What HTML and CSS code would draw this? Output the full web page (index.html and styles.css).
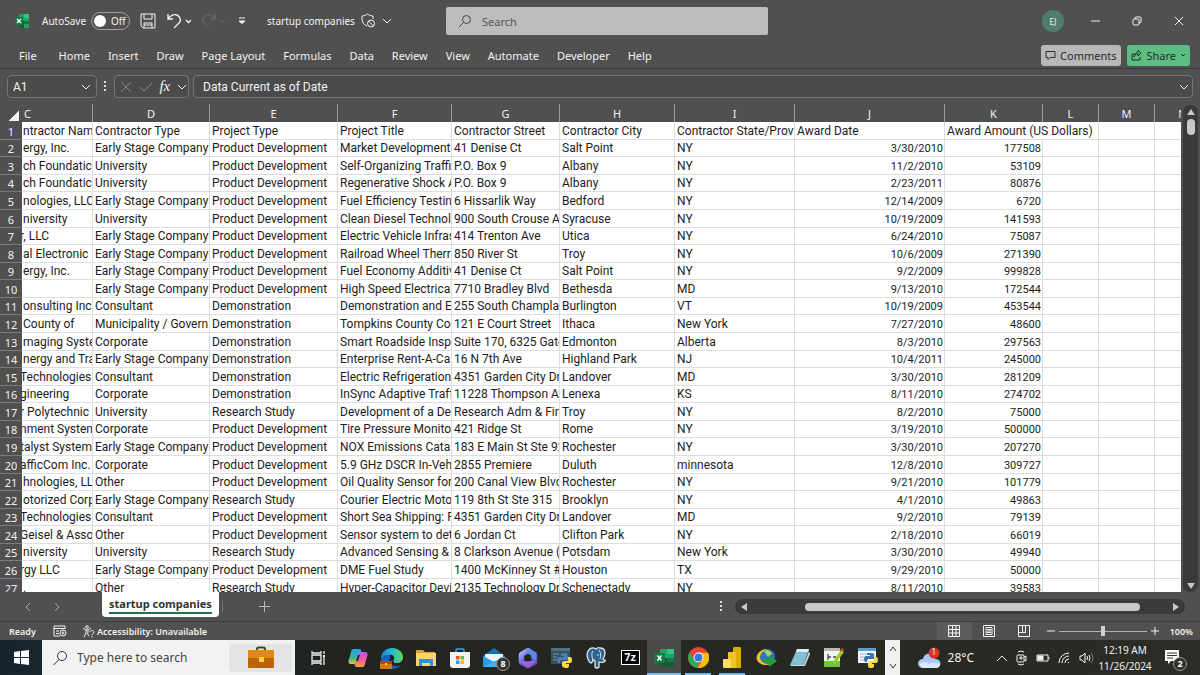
FILE: index.html
```
<!DOCTYPE html>
<html lang="en">
<head>
    <meta charset="UTF-8">
    <meta name="viewport" content="width=device-width, initial-scale=1.0">
    <title>startup companies - Excel</title>
    <link rel="stylesheet" href="styles.css">
</head>
<body>
    <header class="titlebar">
        <div class="title-left">
            <svg class="app-logo" width="14" height="14" viewBox="0 0 14 14"><rect x="4" width="10" height="14" rx="1" fill="#21a366"/><path d="M4 7h5v7H5a1 1 0 0 1-1-1z" fill="#185c37"/><path d="M9 7h5v3H9z" fill="#107c41"/><path d="M9 0h4a1 1 0 0 1 1 1v3H9z" fill="#33c481"/><rect y="3" width="8" height="8" rx="1" fill="#107c41"/><path d="M2 5l4 4M6 5L2 9" stroke="#fff" stroke-width="1.3"/></svg>
            <label class="autosave">AutoSave
                <input type="checkbox" class="autosave-box">
                <span class="toggle">Off</span>
            </label>
            <button class="icon-btn save" aria-label="Save"><svg width="16" height="16" viewBox="0 0 16 16"><path d="M1 1h14v14H3l-2-2zM4 1v5h8V1M4 15v-5h8v5M4 12h8"/></svg></button>
            <button class="icon-btn undo" aria-label="Undo"><svg width="24" height="16" viewBox="0 0 24 16"><path d="M1 1v5h5M1 6c3-4 6-5 9-4 4 2 4 6 2 8l-5 5" stroke-width="1.4"/><path d="M19 7l2.500 2.500L24 7" stroke-width="1.400"/></svg></button>
            <button class="icon-btn redo" aria-label="Redo" disabled><svg width="24" height="16" viewBox="0 0 24 16"><path d="M13 1v5H8M13 6C10 2 7 1 4 2 0 4 0 8 2 10l5 5"/><path d="M18 7l2.500 2.500L23 7"/></svg></button>
            <button class="icon-btn customize" aria-label="Customize toolbar"><svg width="8" height="8" viewBox="0 0 8 8"><path d="M1 1h6M1 4l3 2.500L7 4z"/></svg></button>
            <span class="file-name">startup companies</span>
            <button class="icon-btn" aria-label="File protection"><svg width="30" height="16" viewBox="0 0 30 16"><path d="M6 13C3 12 1 9 1 6V3c2 0 4-1 5.500-2C8 2 10 3 12 3v3"/><circle cx="10" cy="10.500" r="3.500"/><path d="M7.500 8l5 5M22 6l4 4 4-4"/></svg></button>
        </div>
        <label class="search">
            <svg width="14" height="14" viewBox="0 0 14 14"><circle cx="8.500" cy="5.500" r="4"/><path d="M5.500 8.500L1 13"/></svg>
            <input type="text" placeholder="Search" aria-label="Search">
        </label>
        <div class="title-right">
            <button class="avatar">EJ</button>
            <button class="win-btn" aria-label="Minimize"><svg width="10" height="10" viewBox="0 0 10 10"><path d="M1 5h9"/></svg></button>
            <button class="win-btn" aria-label="Restore"><svg width="10" height="10" viewBox="0 0 10 10"><rect x="1" y="3" width="6" height="6" rx="1"/><path d="M3 3V2q0-1 1-1h4q1 0 1 1v4q0 1-2 1"/></svg></button>
            <button class="win-btn" aria-label="Close"><svg width="10" height="10" viewBox="0 0 10 10"><path d="M1 1l8 8M9 1L1 9"/></svg></button>
        </div>
    </header>

    <nav class="ribbon">
        <a href="#" class="file-tab">File</a>
        <a href="#">Home</a>
        <a href="#">Insert</a>
        <a href="#">Draw</a>
        <a href="#">Page Layout</a>
        <a href="#">Formulas</a>
        <a href="#">Data</a>
        <a href="#">Review</a>
        <a href="#">View</a>
        <a href="#">Automate</a>
        <a href="#">Developer</a>
        <a href="#">Help</a>
        <button class="comments"><svg width="11" height="11" viewBox="0 0 11 11"><path d="M1 1.500h9v6H5L3 9.500v-2H1z"/></svg>Comments</button>
        <button class="share"><svg width="11" height="11" viewBox="0 0 11 11"><path d="M3 4H1v6h8V7M3 7c0-2 2-3 4-3V6l3-3-3-2.500v2C5 2.500 3 4 3 7z"/></svg>Share<svg width="6" height="6" viewBox="0 0 6 6"><path d="M1 2l2 2 2-2"/></svg></button>
    </nav>

    <div class="formula-bar">
        <div class="name-box">
            <input type="text" value="A1" aria-label="Name box">
            <svg width="10" height="6" viewBox="0 0 10 6"><path d="M1 1l4 4 4-4"/></svg>
        </div>
        <svg class="dots" width="3" height="11" viewBox="0 0 3 11"><path d="M0 0h2v2H0zM0 4h2v2H0zM0 8h2v2H0z"/></svg>
        <div class="fx-box">
            <svg class="dim" width="12" height="12" viewBox="0 0 12 12"><path d="M1 1l10 10M11 1L1 11"/></svg>
            <svg class="dim" width="14" height="12" viewBox="0 0 14 12"><path d="M1 6l4 4 8-8"/></svg>
            <button class="fx">fx</button>
            <svg width="9" height="6" viewBox="0 0 9 6"><path d="M1 1l4 4 4-4"/></svg>
        </div>
        <div class="formula-box">
            <input type="text" value="Data Current as of Date" aria-label="Formula bar">
            <svg width="10" height="6" viewBox="0 0 10 6"><path d="M1 1l4 4 4-4"/></svg>
        </div>
    </div>

    <main class="sheet">
        <div class="grid">
            <table>
                <colgroup>
                    <col class="w-row"><col class="w-c"><col class="w-d"><col class="w-e"><col class="w-f"><col class="w-g"><col class="w-h"><col class="w-i"><col class="w-j"><col class="w-k"><col class="w-l"><col class="w-l"><col class="w-l">
                </colgroup>
                <thead>
                    <tr><th class="corner"></th><th class="col-c">C</th><th>D</th><th>E</th><th>F</th><th>G</th><th>H</th><th>I</th><th>J</th><th>K</th><th>L</th><th>M</th><th>N</th></tr>
                </thead>
                <tbody id="rows"></tbody>
            </table>
        </div>
        <div class="vscroll">
            <svg width="10" height="8" viewBox="0 0 10 8"><path d="M5 1l4 6H1z"/></svg>
            <div class="vthumb"></div>
            <svg class="down" width="10" height="8" viewBox="0 0 10 8"><path d="M5 7l4-6H1z"/></svg>
        </div>
    </main>

    <div class="tabs">
        <div class="tab-nav">
            <svg width="6" height="10" viewBox="0 0 6 10"><path d="M5 1L1 5l4 4"/></svg>
            <svg width="6" height="10" viewBox="0 0 6 10"><path d="M1 1l4 4-4 4"/></svg>
        </div>
        <button class="tab"><span>startup companies</span></button>
        <button class="add" aria-label="New sheet"><svg width="11" height="11" viewBox="0 0 11 11"><path d="M5.500 0v11M0 5.500h11"/></svg></button>
        <svg class="dots" width="3" height="11" viewBox="0 0 3 11"><path d="M0 0h2v2H0zM0 4h2v2H0zM0 8h2v2H0z"/></svg>
        <div class="hscroll">
            <svg width="8" height="10" viewBox="0 0 8 10"><path d="M1 5l6-4v8z"/></svg>
            <div class="hthumb"></div>
            <svg width="8" height="10" viewBox="0 0 8 10"><path d="M7 5L1 1v8z"/></svg>
        </div>
    </div>

    <footer class="status">
        <span>Ready</span>
        <svg class="macro" width="14" height="12" viewBox="0 0 14 12"><path d="M7 11H1V1h11v3M1 3.500h11M3 6h3M3 8.500h3"/><circle cx="10" cy="8" r="3"/><circle cx="10" cy="8" r="1"/></svg>
        <svg width="13" height="13" viewBox="0 0 13 13"><circle cx="5" cy="2" r="1.300"/><path d="M1 3l3 2v3l-2 4M9 3L6 5v3M4 5h2M5 8l2 3M8 7c0-2 4-2 4 0 0 1.500-2 1.500-2 3M10 11v1.500"/></svg>
        <span class="access">Accessibility: Unavailable</span>
        <div class="views">
            <button class="on" aria-label="Normal"><svg width="12" height="12" viewBox="0 0 12 12"><path d="M.5.5h11v11H.5zM4.500 0v12M8 0v12M0 4.500h12M0 8h12"/></svg></button>
            <button aria-label="Page Layout"><svg width="12" height="12" viewBox="0 0 12 12"><path d="M.5.5h11v11H.5zM3 2.500h6v7H3zM4 4.500h4M4 6h4M4 7.500h4"/></svg></button>
            <button aria-label="Page Break Preview"><svg width="12" height="12" viewBox="0 0 12 12"><path d="M.5.5h11v11H.5zM4.500 0v7.500M7.500 0v7.500M0 7.500h8"/></svg></button>
        </div>
        <button class="zoom-btn" aria-label="Zoom out"><svg width="8" height="8" viewBox="0 0 8 8"><path d="M0 4h8"/></svg></button>
        <input type="range" class="zoom" min="10" max="190" value="100" aria-label="Zoom">
        <button class="zoom-btn" aria-label="Zoom in"><svg width="8" height="8" viewBox="0 0 8 8"><path d="M0 4h8M4 0v8"/></svg></button>
        <span class="percent">100%</span>
    </footer>

    <div class="taskbar">
        <button class="start" aria-label="Start"><svg width="15" height="15" viewBox="0 0 15 15"><path d="M0 2l6-1v6H0zM7 1l8-1v7H7zM0 8h6v6l-6-1zM7 8h8v7l-8-1z"/></svg></button>
        <label class="task-search">
            <svg width="16" height="16" viewBox="0 0 16 16"><circle cx="10" cy="6" r="4.500"/><path d="M7 9.500L1.500 15"/></svg>
            <input type="text" placeholder="Type here to search" aria-label="Type here to search">
            <span class="briefcase"><svg width="28" height="24" viewBox="0 0 28 24"><path d="M10 5V3q0-1.500 1.500-1.500h5Q18 1.500 18 3v2" fill="none" stroke="#4a4038" stroke-width="2"/><rect x="1" y="4" width="26" height="9" rx="1" fill="#e08a10"/><path d="M1 12h26v9q0 1-1 1H2q-1 0-1-1z" fill="#b9640a"/><rect x="12" y="11" width="5" height="5" fill="#ffd43a"/></svg></span>
        </label>
        <button class="task-view" aria-label="Task View"><svg width="15" height="14" viewBox="0 0 15 14"><path d="M1 0v2h9V0M1 14v-2h9v2M1 4h9v6H1zM13 0v3M13 6v8" fill="none" stroke="#eee" stroke-width="1.300"/><path d="M12 4h2v2h-2z" fill="#eee"/></svg></button>
        <div class="apps">
            <button aria-label="Copilot"><svg width="22" height="22" viewBox="0 0 22 22"><defs><linearGradient id="cp1" x2="0" y2="1"><stop stop-color="#2a9df0"/><stop offset=".6" stop-color="#35b98e"/><stop offset="1" stop-color="#f0c52c"/></linearGradient><linearGradient id="cp2" x2="0" y2="1"><stop stop-color="#b15cf0"/><stop offset=".5" stop-color="#ee5a9a"/><stop offset="1" stop-color="#f9a04c"/></linearGradient></defs><path d="M6 2h6q2 0 2.500 2L11 14q-1 3-3 3H4q-3 0-2.500-3L4 5q.5-3 2-3z" fill="url(#cp1)"/><path d="M16 20h-6q-2 0-2.500-2L11 8q1-3 3-3h4q3 0 2.500 3L18 17q-.5 3-2 3z" fill="url(#cp2)"/><path d="M11 8l-2 6h2l2-6z" fill="#252724"/></svg></button>
            <button aria-label="Edge"><svg width="24" height="22" viewBox="0 0 24 22"><defs><linearGradient id="ed" x2="1"><stop stop-color="#1683d8"/><stop offset=".5" stop-color="#25b9d8"/><stop offset="1" stop-color="#67d75b"/></linearGradient></defs><path d="M1 12C1 5 6 1 12 1s11 4 11 9c0 4-3 6-6 6-4 0-4-2-3-4 1-3-2-5-5-4-3 0-6 2-8 4z" fill="url(#ed)"/><path d="M1 12c3-5 10-6 9-1-3 4 1 9 8 8 2 0 3-1 4-2-3 4-7 5-11 5C5 22 1 17 1 12z" fill="#1565b8"/><rect y="14" width="12" height="8" fill="#d9780f"/><path d="M0 14h12v3H0z" fill="#a84d08"/><path d="M5 16h2v2H5z" fill="#ffd43a"/></svg></button>
            <button aria-label="File Explorer"><svg width="20" height="18" viewBox="0 0 20 18"><path d="M0 1h7l2 2h10v5H0z" fill="#e0a030"/><path d="M0 4h20v13H0z" fill="#fbd568"/><path d="M3 10h14v7h-3v-3H6v3H3z" fill="#3b8fd8"/></svg></button>
            <button aria-label="Store"><svg width="20" height="20" viewBox="0 0 20 20"><path d="M6 5V2q0-1 1-1h6q1 0 1 1v3" fill="none" stroke="#2ea4e8" stroke-width="1.500"/><path d="M0 4h20v13q0 3-3 3H3q-3 0-3-3z" fill="#f1f2f3"/><path d="M6 8h3.500v3.500H6z" fill="#e8502a"/><path d="M10.500 8H14v3.500h-3.500z" fill="#78b82a"/><path d="M6 12.500h3.500V16H6z" fill="#2a9fe0"/><path d="M10.500 12.500H14V16h-3.500z" fill="#f7b916"/></svg></button>
            <button class="has-badge" aria-label="Mail"><svg width="22" height="20" viewBox="0 0 22 20"><path d="M0 8l11-8 11 8v11H0z" fill="#1570b8"/><path d="M2 6h18v9H2z" fill="#e8f3fb"/><path d="M0 8l11 6-11 5z" fill="#28a0e8"/><path d="M22 8l-11 6 11 5z" fill="#1c86d0"/><path d="M0 19l11-6 11 6z" fill="#36b2f2"/></svg><span class="badge">8</span></button>
            <button aria-label="Microsoft 365"><svg width="20" height="22" viewBox="0 0 20 22"><defs><linearGradient id="m3" x2="1" y2="1"><stop stop-color="#b9b4f5"/><stop offset=".4" stop-color="#6f62dd"/><stop offset="1" stop-color="#7448c8"/></linearGradient></defs><path d="M10 3.500l6.500 4v7.500L10 18.500 3.500 15V7.500z" fill="none" stroke="url(#m3)" stroke-width="5.500" stroke-linejoin="round"/><path d="M10 1l8 5v8l-5-3V8l-5-3z" fill="#4f9be6" opacity=".75"/><path d="M2 15l9-1 7 0-7 6H9z" fill="#a873e8" opacity=".6"/></svg></button>
            <button aria-label="Python script"><svg width="22" height="20" viewBox="0 0 22 20"><path d="M0 0h19v16H0z" fill="#38515c"/><path d="M0 0h19v3H0z" fill="#4d7386"/><path d="M2 6h6M2 9h4M2 12h5M11 6h5" stroke="#78909c"/><path d="M10 6h5q2 0 2 2v4h-6q-2 0-2 3H8q-2 0-2-3 0-2 2-3h5V8h-3z" fill="#3f82c0"/><path d="M17 9h2q2 0 2 3t-2 3h-4v1h3v2q0 2-3 2t-4-2v-3q0-2 2-2h4z" fill="#ffd94a"/></svg></button>
            <button aria-label="PostgreSQL"><svg width="22" height="22" viewBox="0 0 22 22"><path d="M3 4c-2 4 0 11 3 12 1 0 2-2 2-3 1 0 1 0 2 1v6q2 2 4 0v-5c3 1 7 0 6-2-2 0-2 0-2-1 3-5 3-11-3-11-2-1-3 0-4 1C8 0 5 1 3 4z" fill="#31648c" stroke="#dce6ee" stroke-width="1.300"/><path d="M8 4c-2 3-1 6 0 9M14 3c2 3 2 5 1 9M12 8h2" fill="none" stroke="#dce6ee"/></svg></button>
            <button class="seven" aria-label="7-Zip"><span>7z</span></button>
            <button class="running active" aria-label="Excel"><svg width="20" height="18" viewBox="0 0 20 18"><path d="M6 0h7v9H6z" fill="#21a366"/><path d="M13 0h7v5h-7z" fill="#33c481"/><path d="M13 5h7v5h-7z" fill="#21a366"/><path d="M6 9h14v9H6z" fill="#185c37"/><path d="M13 9h7v4h-7z" fill="#107c41"/><rect y="4" width="11" height="10" rx="1" fill="#107c41"/><path d="M3.500 6.500l4 5M7.500 6.500l-4 5" stroke="#fff" stroke-width="1.500"/></svg></button>
            <button class="running" aria-label="Chrome"><svg width="21" height="21" viewBox="0 0 22 22"><circle cx="11" cy="11" r="11" fill="#e94335"/><path d="M1.500 5.500L6.500 14 11 16l-1 6A11 11 0 0 1 1.500 5.500z" fill="#34a853"/><path d="M11 6h10a11 11 0 0 1-11 16l5-8.500z" fill="#fbbc05"/><circle cx="11" cy="11" r="5.200" fill="#fff"/><circle cx="11" cy="11" r="4.200" fill="#3478e8"/></svg></button>
            <button class="running" aria-label="Power BI"><svg width="18" height="21" viewBox="0 0 18 21"><rect x="10" width="8" height="21" rx="1" fill="#e0a80c"/><rect x="5" y="5" width="8" height="16" rx="1" fill="#f0c32a"/><rect y="12" width="8" height="9" rx="1" fill="#fbdd6a"/></svg></button>
            <button aria-label="Download Manager"><svg width="22" height="20" viewBox="0 0 22 20"><circle cx="12" cy="9" r="8" fill="#2f72c8"/><path d="M12 1C5 1 0 7 2 12c2 5 9 6 13 4-5 0-9-2-10-6 0-4 3-7 7-9z" fill="#f0c020"/><path d="M9 3c3-2 7 0 8 3l-4 3z" fill="#a8d860"/><path d="M7 11h7V7l8 6-8 6v-4c-4 0-6-2-7-4z" fill="#22a035"/></svg></button>
            <button aria-label="Notepad"><svg width="20" height="19" viewBox="0 0 20 19"><path d="M7 1h12l-5 16H0z" fill="#80bdd0"/><path d="M7 1h12l-1 3H6z" fill="#dcecf0"/><path d="M0 17h14l5-14 1 3-5 12H1z" fill="#d2dadd"/><path d="M6 7h9M5 10h9M4 13h9" stroke="#8fc6d6"/></svg></button>
            <button aria-label="Notepad++"><svg width="20" height="21" viewBox="0 0 20 21"><rect y="1" width="16" height="19" fill="#f5f5f0"/><path d="M0 1h16v3H0z" fill="#b8b8b8"/><path d="M0 14h16v6H0z" fill="#6cc830"/><path d="M4 7v6M4 10h3M9 10h3" fill="none" stroke="#444" stroke-width="1.300"/><path d="M17 3l3 2-8 11-3 1 1-4z" fill="#a5c733"/><path d="M18 1l2 1-1 3-3-2z" fill="#c54b34"/></svg></button>
            <button aria-label="Python file"><svg width="20" height="20" viewBox="0 0 20 20"><path d="M0 0h18v15H0z" fill="#f2f6f8"/><path d="M0 0h18v3H0z" fill="#56a0d2"/><path d="M2 6h6M2 9h4M2 12h4" stroke="#99b8ca"/><path d="M9 5h5q2 0 2 2v4h-5q-2 0-2 3H8q-2 0-2-3t2-3h4V7H9z" fill="#3b76a8"/><path d="M16 9h2q2 0 2 3t-2 3h-4v1h2v2q0 2-3 2t-3-2v-3q0-2 2-2h4z" fill="#ffd84a"/></svg></button>
        </div>
        <div class="pager">
            <svg width="8" height="6" viewBox="0 0 8 6"><path d="M1 5l3-4 3 4"/></svg>
            <svg width="8" height="6" viewBox="0 0 8 6"><path d="M1 1l3 4 3-4"/></svg>
        </div>
        <div class="weather">
            <svg width="24" height="22" viewBox="0 0 24 22"><path d="M5 21a5 4.500 0 0 1 0-9c1-7 11-7 12 0a5 4.500 0 0 1 1 9z" fill="#a9c8f5"/><path d="M2 17c3-3 8-2 9 0 3-2 7-1 11 0 0 3-2 4-4 4H5c-2 0-3-2-3-4z" fill="#dbe7fb"/><circle cx="16" cy="6" r="5.500" fill="#d5352b"/></svg>
            <span class="alert">1</span>
            <span>28°C</span>
        </div>
        <div class="tray">
            <svg width="12" height="8" viewBox="0 0 12 8"><path d="M1 7l5-5 5 5"/></svg>
            <svg width="12" height="16" viewBox="0 0 12 16"><rect x="1" y="5" width="7" height="7" rx="1"/><path d="M8 7l2-1v5l-2-1M2 2q3-2 6 0M2 14q3 2 6 0M4 7h2v2H4z"/></svg>
            <svg width="14" height="8" viewBox="0 0 14 8"><path d="M1 1h11v6H1zM13 3v2"/><path d="M2 2h5v4H2z" fill="#eee"/></svg>
            <svg width="13" height="12" viewBox="0 0 13 12"><path d="M1 11A10 10 0 0 1 11 1M4 11a7 7 0 0 1 7-7M7 11a4 4 0 0 1 4-4M10 11l1-1"/></svg>
            <svg width="15" height="12" viewBox="0 0 15 12"><path d="M1 4h2l3-3v10L3 8H1zM8 4q1 2 0 4M10 3q2 3 0 6"/><path d="M12 1q4 5 0 10" opacity=".4"/></svg>
        </div>
        <div class="clock">12:19 AM<br>11/26/2024</div>
        <button class="notify" aria-label="Notifications"><svg width="16" height="15" viewBox="0 0 16 15"><path d="M0 0h14v11H6l-3 3v-3H0z" fill="#fff"/><path d="M2 3h10M2 5.500h10M2 8h6" stroke="#33342f"/></svg><span class="badge">2</span></button>
    </div>

    <script>
        // One line per sheet row, columns C to K
        const data = `ntractor Nam|Contractor Type|Project Type|Project Title|Contractor Street|Contractor City|Contractor State/Provi|Award Date|Award Amount (US Dollars)
ergy, Inc.|Early Stage Company|Product Development|Market Development|41 Denise Ct|Salt Point|NY|3/30/2010|177508
ch Foundatic|University|Product Development|Self-Organizing Traffi|P.O. Box 9|Albany|NY|11/2/2010|53109
ch Foundatic|University|Product Development|Regenerative Shock A|P.O. Box 9|Albany|NY|2/23/2011|80876
nologies, LLC|Early Stage Company|Product Development|Fuel Efficiency Testin|6 Hissarlik Way|Bedford|NY|12/14/2009|6720
niversity|University|Product Development|Clean Diesel Technol|900 South Crouse Av|Syracuse|NY|10/19/2009|141593
r, LLC|Early Stage Company|Product Development|Electric Vehicle Infras|414 Trenton Ave|Utica|NY|6/24/2010|75087
al Electronic|Early Stage Company|Product Development|Railroad Wheel Therr|850 River St|Troy|NY|10/6/2009|271390
ergy, Inc.|Early Stage Company|Product Development|Fuel Economy Additiv|41 Denise Ct|Salt Point|NY|9/2/2009|999828
|Early Stage Company|Product Development|High Speed Electrical|7710 Bradley Blvd|Bethesda|MD|9/13/2010|172544
onsulting Inc|Consultant|Demonstration|Demonstration and E|255 South Champlai|Burlington|VT|10/19/2009|453544
County of|Municipality / Govern|Demonstration|Tompkins County Co|121 E Court Street|Ithaca|New York|7/27/2010|48600
maging Syste|Corporate|Demonstration|Smart Roadside Insp|Suite 170, 6325 Gate|Edmonton|Alberta|8/3/2010|297563
nergy and Tra|Early Stage Company|Demonstration|Enterprise Rent-A-Ca|16 N 7th Ave|Highland Park|NJ|10/4/2011|245000
Technologies|Consultant|Demonstration|Electric Refrigeration|4351 Garden City Dr|Landover|MD|3/30/2010|281209
gineering|Corporate|Demonstration|InSync Adaptive Traff|11228 Thompson Av|Lenexa|KS|8/11/2010|274702
r Polytechnic|University|Research Study|Development of a De|Research Adm & Fin|Troy|NY|8/2/2010|75000
nment System|Corporate|Product Development|Tire Pressure Monito|421 Ridge St|Rome|NY|3/19/2010|500000
talyst System|Early Stage Company|Product Development|NOX Emissions Cata|183 E Main St Ste 925|Rochester|NY|3/30/2010|207270
afficCom Inc.|Corporate|Product Development|5.9 GHz DSCR In-Vehi|2855 Premiere|Duluth|minnesota|12/8/2010|309727
hnologies, LL|Other|Product Development|Oil Quality Sensor for|200 Canal View Blvd|Rochester|NY|9/21/2010|101779
otorized Corp|Early Stage Company|Research Study|Courier Electric Moto|119 8th St Ste 315|Brooklyn|NY|4/1/2010|49863
Technologies|Consultant|Product Development|Short Sea Shipping: P|4351 Garden City Dr|Landover|MD|9/2/2010|79139
Geisel & Assoc|Other|Product Development|Sensor system to dete|6 Jordan Ct|Clifton Park|NY|2/18/2010|66019
niversity|University|Research Study|Advanced Sensing &|8 Clarkson Avenue (|Potsdam|New York|3/30/2010|49940
rgy LLC|Early Stage Company|Product Development|DME Fuel Study|1400 McKinney St # 2|Houston|TX|9/29/2010|50000
.|Other|Research Study|Hyper-Capacitor Devi|2135 Technology Dr|Schenectady|NY|8/11/2010|39583`;

        // rows whose first visible letter is cut by the row header
        const cutRows = [7, 15, 16, 17, 18, 19, 20, 23, 24, 26];
        const tbody = document.getElementById('rows');

        data.split('\n').forEach((line, r) => {
            const tr = document.createElement('tr');
            const th = document.createElement('th');
            th.textContent = r + 1;
            tr.appendChild(th);
            line.split('|').concat('', '', '').forEach((text, c) => {
                const td = document.createElement('td');
                td.textContent = text;
                if (c === 0) td.className = cutRows.includes(r + 1) ? 'first cut' : 'first';
                if (r > 0 && (c === 7 || c === 8)) td.className = 'num';
                if (r === 0 && c === 8) td.className = 'spill';
                tr.appendChild(td);
            });
            tbody.appendChild(tr);
        });
    </script>
</body>
</html>
```
FILE: styles.css
```
* {
    box-sizing: border-box;
}

body {
    margin: 0;
    height: 100vh;
    display: flex;
    flex-direction: column;
    overflow: hidden;
    background-color: #505050;
    color: #f2f2f2;
    font-family: "Noto Sans", sans-serif;
    font-size: 11px;
}

button, input {
    font: inherit;
    color: inherit;
    background: none;
    border: 0;
    padding: 0;
    margin: 0;
}

input[type="text"] {
    flex: 1;
    min-width: 0;
    outline: none;
}

a {
    color: inherit;
    text-decoration: none;
}

svg {
    display: block;
    flex: none;
    fill: none;
    stroke: currentColor;
}

/* title bar */
.titlebar {
    display: grid;
    grid-template-columns: 37fr 27fr 36fr;
    align-items: center;
    height: 42px;
}

.title-left {
    display: flex;
    align-items: center;
    padding-left: 15px;
    white-space: nowrap;
}

.app-logo {
    stroke: none;
    margin-right: 13px;
}

.autosave {
    display: flex;
    align-items: center;
    gap: 5px;
    font-size: 10px;
    margin-right: 10px;
}

.autosave-box {
    position: absolute;
    opacity: 0;
}

.toggle {
    display: flex;
    align-items: center;
    gap: 5px;
    width: 39px;
    height: 18px;
    padding-left: 2px;
    border: 1px solid #a0a0a0;
    border-radius: 9px;
}

.toggle::before {
    content: "";
    width: 12px;
    height: 12px;
    border-radius: 50%;
    background-color: #fff;
}

.icon-btn {
    margin-right: 11px;
}

.redo {
    color: #6e6e6e;
    margin-right: 12px;
}

.customize {
    margin-right: 21px;
}

.customize path {
    fill: currentColor;
}

.file-name {
    margin-right: 6px;
    font-size: 10px;
}

.search {
    display: flex;
    align-items: center;
    gap: 10px;
    height: 28px;
    margin-left: 2px;
    padding-left: 12px;
    border-radius: 2px;
    background-color: #bdbdbd;
    color: #444;
}

.search input::placeholder {
    color: #555;
    opacity: 1;
}

.title-right {
    display: flex;
    justify-content: flex-end;
    align-items: center;
}

.avatar {
    width: 22px;
    height: 22px;
    margin-right: 10px;
    border-radius: 50%;
    background-color: #4f7d70;
    font-size: 8px;
}

.win-btn {
    display: flex;
    justify-content: center;
    width: 42px;
}

/* ribbon tabs */
.ribbon {
    display: flex;
    align-items: center;
    gap: 18px;
    height: 27px;
    padding: 0 10px 0 19px;
    border-bottom: 1px solid #383838;
}

.file-tab {
    margin-right: 4px;
}

.comments, .share {
    display: flex;
    align-items: center;
    gap: 4px;
    height: 21px;
    border-radius: 3px;
    color: #2b2b2b;
}

.comments {
    margin-left: auto;
    padding: 0 5px 0 4px;
    background-color: #b8b8b8;
}

.share {
    margin-left: -12px;
    padding: 0 4px;
    background-color: #5cbd82;
}

/* formula bar */
.formula-bar {
    display: flex;
    align-items: center;
    height: 35px;
    padding: 0 7px;
    font-family: Roboto, sans-serif;
    font-size: 12px;
}

.name-box, .fx-box, .formula-box {
    display: flex;
    align-items: center;
    height: 23px;
    border: 1px solid #767676;
    border-radius: 4px;
    background-color: #4b4b4b;
}

.name-box {
    width: 90px;
    padding: 0 5px;
}

.formula-box {
    flex: 1;
    padding: 0 3px 0 9px;
}

.dots {
    fill: #ddd;
    stroke: none;
}

.formula-bar .dots {
    margin: 0 7px;
}

.fx-box {
    width: 75px;
    margin-right: 4px;
    padding: 0 2px 0 5px;
    justify-content: space-between;
}

.dim {
    color: #858585;
}

.fx {
    font-family: "Liberation Serif", serif;
    font-style: italic;
    font-size: 15px;
}

/* sheet */
.sheet {
    display: flex;
    flex: 1;
    min-height: 0;
}

.grid {
    flex: 1;
    min-width: 0;
    overflow: hidden;
    background-color: #fff;
}

table {
    width: 1211px;
    table-layout: fixed;
    border-spacing: 0;
    font-family: Roboto, sans-serif;
    font-size: 12px;
    line-height: 15px;
    color: #1c1c1c;
}

.w-row { width: 22px; }
.w-c { width: 71px; }
.w-d { width: 117px; }
.w-e { width: 128px; }
.w-f { width: 114px; }
.w-g { width: 108px; }
.w-h { width: 115px; }
.w-i { width: 120px; }
.w-j { width: 150px; }
.w-k { width: 98px; }
.w-l { width: 56px; }

th {
    padding: 0;
    font-family: "Noto Sans", sans-serif;
    font-weight: normal;
    font-size: 11px;
    color: #f2f2f2;
    background-color: #505050;
}

thead th {
    height: 18px;
    border-right: 1px solid #9a9a9a;
}

thead .corner {
    border-right: 0;
    background: linear-gradient(135deg, #505050 50%, #f2f2f2 50%) no-repeat 9px 7px / 10px 10px #505050;
}

.col-c {
    text-align: left;
    padding-left: 2px;
}

tbody th {
    padding-top: 1px;
    border-bottom: 1px solid #7a7a7a;
}

td {
    height: 18px;
    padding: 1px 0 0 2px;
    border-right: 1px solid #dedede;
    border-bottom: 1px solid #dedede;
    white-space: nowrap;
    overflow: hidden;
}

/* row pitch is a little under 18px */
tr:nth-child(7n+2) td,
tr:nth-child(7n+4) td,
tr:nth-child(7n) td {
    height: 17px;
}

.first {
    padding-left: 1px;
}

.cut {
    text-indent: -3px;
}

.num {
    padding-right: 1px;
    text-align: right;
    font-size: 11px;
}

.spill {
    overflow: visible;
    border-right-color: transparent;
}

.vscroll {
    display: flex;
    flex-direction: column;
    align-items: center;
    width: 15px;
    margin: 1px 2px 0 2px;
    padding: 3px 0 2px;
    border-radius: 7px;
    background-color: #3a3a3a;
}

.vscroll svg, .hscroll svg {
    fill: #c8c8c8;
    stroke: none;
}

.vthumb {
    width: 8px;
    height: 16px;
    margin-top: 3px;
    border-radius: 4px;
    background-color: #c8c8c8;
}

.down {
    margin-top: auto;
}

/* sheet tabs */
.tabs {
    display: flex;
    align-items: center;
    height: 30px;
    padding-right: 15px;
    border-bottom: 1px solid #3f3f3f;
}

.tab-nav {
    display: flex;
    gap: 23px;
    width: 102px;
    padding-left: 25px;
    color: #a5a5a5;
}

.tab {
    display: flex;
    align-self: flex-start;
    height: 25px;
    padding: 3px 7px 0;
    border-radius: 0 0 4px 4px;
    background-color: #fff;
    color: #333;
    font-weight: bold;
}

.tab span {
    height: 19px;
    line-height: 18px;
    border-bottom: 2px solid #217346;
}

.add {
    margin-right: auto;
    margin-left: 3px;
    padding-left: 36px;
    border-left: 1px solid #707070;
    color: #bdbdbd;
}

.hscroll {
    display: flex;
    align-items: center;
    width: 450px;
    height: 15px;
    margin-left: 12px;
    padding: 0 5px;
    border-radius: 7px;
    background-color: #3a3a3a;
}

.hthumb {
    width: 335px;
    height: 8px;
    margin: 0 32px 0 auto;
    border-radius: 4px;
    background-color: #c8c8c8;
}

/* status bar */
.status {
    display: flex;
    align-items: center;
    height: 18px;
    padding: 0 7px 0 9px;
    font-size: 9px;
    font-weight: 600;
}

.macro {
    margin: 0 15px 0 17px;
}

.access {
    margin-left: 2px;
}

.views {
    display: flex;
    margin: 0 21px 0 auto;
}

.views button {
    display: flex;
    align-items: center;
    justify-content: center;
    width: 35px;
    height: 18px;
}

.views .on {
    background-color: #5c5c5c;
}

.views + .zoom-btn {
    margin-left: -16px;
}

.zoom {
    appearance: none;
    width: 88px;
    height: 12px;
    margin: 0 4px;
    background: linear-gradient(#b0b0b0, #b0b0b0) no-repeat center / 100% 1px;
}

.zoom::-webkit-slider-thumb {
    appearance: none;
    width: 4px;
    height: 10px;
    background-color: #d0d0d0;
}

.percent {
    margin-left: 11px;
}

/* taskbar */
.taskbar {
    display: flex;
    align-items: stretch;
    height: 35px;
    background: linear-gradient(90deg, #18242d, #22241f 30%, #2b2c25);
}

.taskbar svg {
    stroke: none;
}

.taskbar button {
    display: flex;
    align-items: center;
    justify-content: center;
}

.start {
    width: 42px;
}

.start svg {
    fill: #fff;
}

.task-search {
    display: flex;
    align-items: center;
    gap: 9px;
    width: 253px;
    padding: 0 3px 0 10px;
    background-color: #f2f2f2;
    color: #333;
    font-size: 12px;
}

.task-search > svg, .pager svg, .tray svg {
    stroke: currentColor;
}

.task-search input::placeholder {
    color: #444;
    opacity: 1;
}

.briefcase {
    display: flex;
    align-items: center;
    justify-content: center;
    width: 63px;
    height: 28px;
    border-radius: 4px;
    background-color: #e4e4e4;
}

.task-view {
    width: 46px;
}

.apps {
    display: flex;
}

.apps button {
    width: 34px;
}

.apps .running {
    position: relative;
}

.running::after {
    content: "";
    position: absolute;
    bottom: 0;
    left: 4px;
    right: 4px;
    height: 2px;
    background-color: #76b9ed;
}

.apps .active {
    background-color: #4a4b48;
}

.active::after {
    left: 0;
    right: 0;
}

.has-badge, .notify {
    position: relative;
}

.badge {
    position: absolute;
    right: 1px;
    bottom: 4px;
    width: 14px;
    height: 14px;
    border: 1px solid #999;
    border-radius: 50%;
    background-color: #30332f;
    color: #fff;
    font-size: 9px;
    font-weight: bold;
    line-height: 12px;
    text-align: center;
}

.seven span {
    width: 19px;
    height: 15px;
    border: 1px solid #fff;
    background-color: #000;
    font-size: 11px;
    font-weight: bold;
    line-height: 12px;
}

.pager {
    display: flex;
    flex-direction: column;
    justify-content: space-around;
    align-items: center;
    width: 15px;
    background-color: #f0f0f0;
    color: #333;
}

.weather {
    position: relative;
    display: flex;
    align-items: center;
    gap: 6px;
    margin-left: auto;
    font-size: 12px;
}

.alert {
    position: absolute;
    left: 14px;
    top: 6px;
    font-size: 8px;
    line-height: 12px;
}

.tray {
    display: flex;
    align-items: center;
    gap: 8px;
    margin-left: 22px;
}

.clock {
    align-self: center;
    width: 62px;
    font-size: 10px;
    line-height: 16px;
    text-align: center;
}

.notify {
    width: 30px;
    margin: 0 12px 0 2px;
}
```
